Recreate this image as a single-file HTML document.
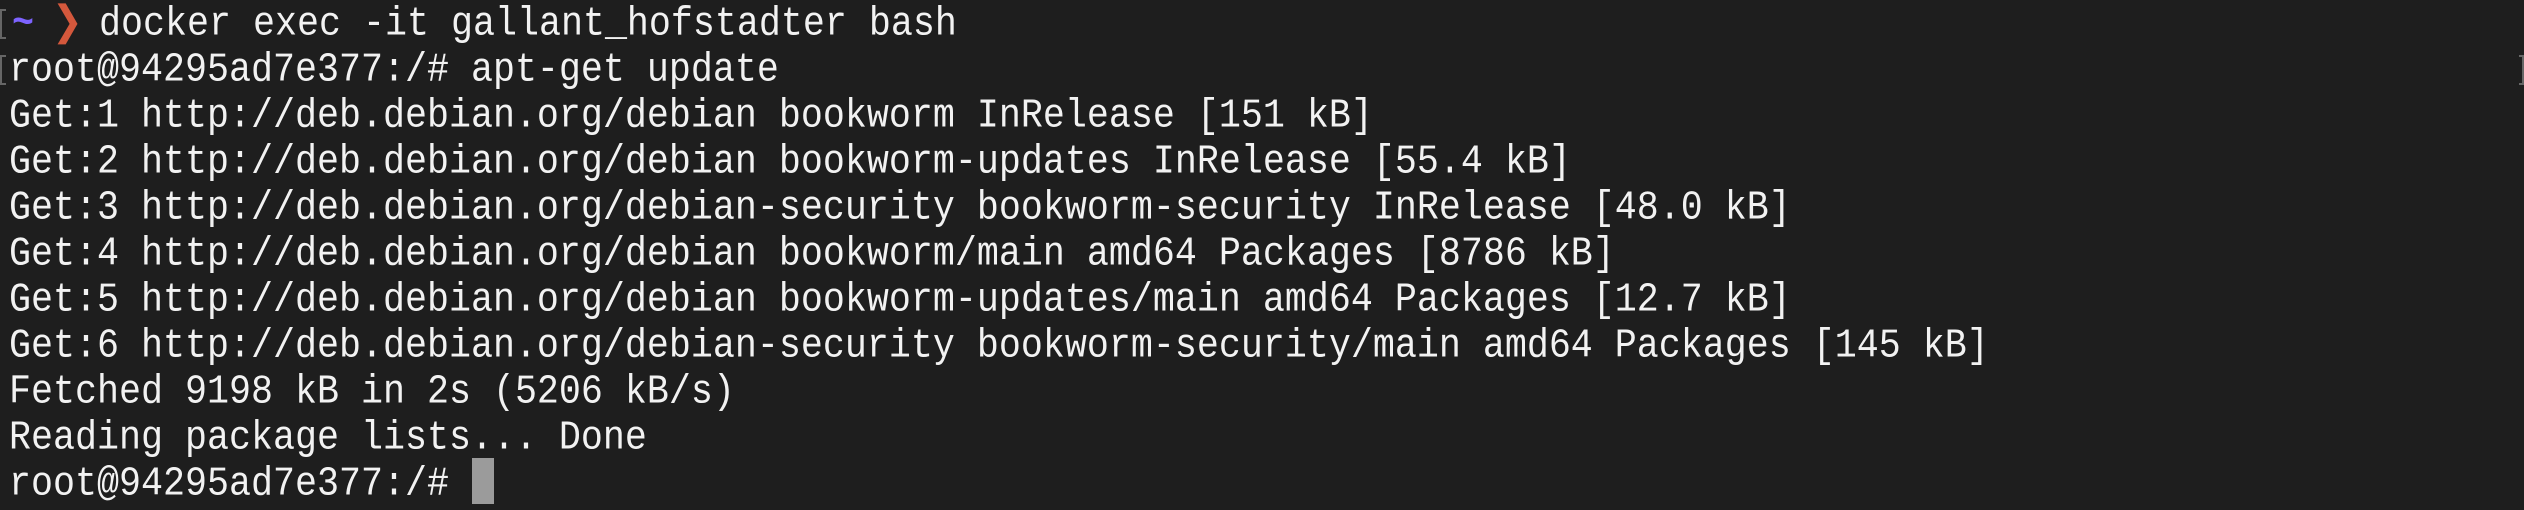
<!DOCTYPE html>
<html><head><meta charset="utf-8"><style>
html,body{margin:0;padding:0;background:#1e1e1e;}
body{width:2524px;height:508px;overflow:hidden;position:relative;font-family:"Liberation Mono",monospace;font-size:36.67px;color:#f2f2f2;}
.l{position:absolute;left:9px;height:46px;line-height:46px;white-space:pre;transform:scaleY(1.12);transform-origin:50% 60%;}
.m{position:absolute;left:0;width:6px;height:30px;border:2px solid #666;border-right:none;box-sizing:border-box;}
.cur{position:absolute;left:472px;top:458px;width:22px;height:46px;background:#9b9b9b;}
</style></head><body>
<div class="m" style="top:9px"></div>
<div class="m" style="top:55px"></div>
<div style="position:absolute;right:0;top:55px;width:5px;height:30px;border:2px solid #666;border-left:none;box-sizing:border-box"></div>
<div class="l" style="top:2px;left:12px;color:#7d63ff;font-weight:bold">~</div>
<div class="l" style="top:2px;left:52px;color:#d4583c">❯</div>
<div class="l" style="top:2px;left:99px">docker exec -it gallant_hofstadter bash</div>
<div class="l" style="top:48px">root@94295ad7e377:/# apt-get update</div>
<div class="l" style="top:94px">Get:1 http://deb.debian.org/debian bookworm InRelease [151 kB]</div>
<div class="l" style="top:140px">Get:2 http://deb.debian.org/debian bookworm-updates InRelease [55.4 kB]</div>
<div class="l" style="top:186px">Get:3 http://deb.debian.org/debian-security bookworm-security InRelease [48.0 kB]</div>
<div class="l" style="top:232px">Get:4 http://deb.debian.org/debian bookworm/main amd64 Packages [8786 kB]</div>
<div class="l" style="top:278px">Get:5 http://deb.debian.org/debian bookworm-updates/main amd64 Packages [12.7 kB]</div>
<div class="l" style="top:324px">Get:6 http://deb.debian.org/debian-security bookworm-security/main amd64 Packages [145 kB]</div>
<div class="l" style="top:370px">Fetched 9198 kB in 2s (5206 kB/s)</div>
<div class="l" style="top:416px">Reading package lists... Done</div>
<div class="l" style="top:462px">root@94295ad7e377:/# </div>
<div class="cur"></div>
</body></html>
